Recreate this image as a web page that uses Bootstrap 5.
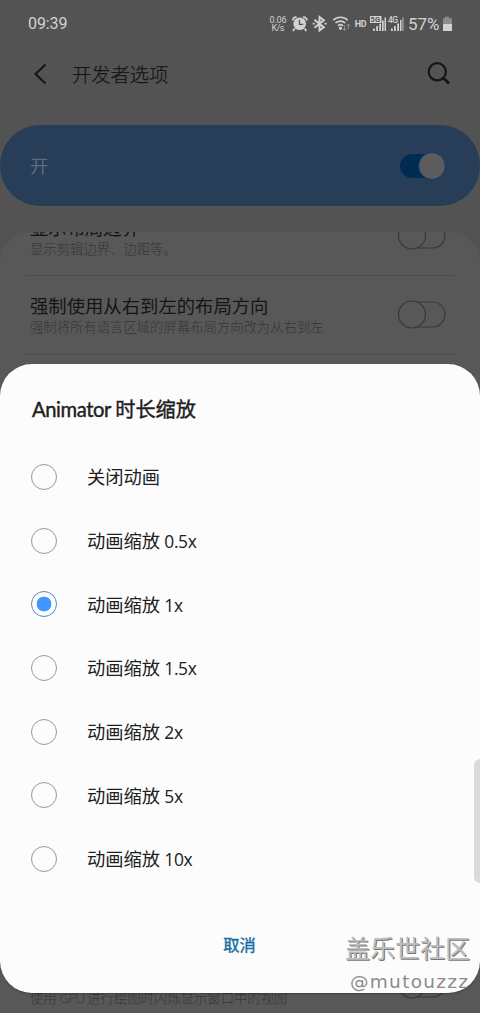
<!DOCTYPE html>
<html lang="zh-CN">
<head>
<meta charset="utf-8">
<meta name="viewport" content="width=device-width, initial-scale=1">
<title>开发者选项</title>
<link rel="stylesheet" href="https://cdn.jsdelivr.net/npm/bootstrap@5.3.0/dist/css/bootstrap.min.css">
<style>
body{background:#535353;font-family:"Open Sans","Noto Sans CJK SC",sans-serif;color:#151515}
.screen{width:480px;height:1013px}
.status{height:47px;padding:0 27px 0 28px;color:#d2d2d2;font-family:Roboto,"Noto Sans CJK SC",sans-serif}
.clock{font-size:16px;letter-spacing:-.1px}
.appbar{height:54px;padding:0 29px 0 32px}
.appbar-title{font-size:19.3px;font-weight:300;line-height:28px;-webkit-text-stroke:.25px #151515;padding-top:2px}
.master{height:81px;margin-top:24px;padding:0 33px 0 30px;border-radius:40px;background:#283d58;color:#606b7a;font-size:18.5px}
.panel{margin-top:26px;height:781px;border-radius:32px 32px 0 0;background:#585858}
.setting{margin:0 25px;padding:0 8px 0 5px;border-bottom:1px solid #4d4d4d}
.setting-title{font-size:18.35px;line-height:24px}
.setting-sub{font-size:13.35px;line-height:18px;color:#363636;font-weight:300;white-space:nowrap}
.first{height:44px}.second{height:79px}.last-row{height:48px;border:0}
.first .copy{padding-bottom:17px}
.last-row .copy{padding-top:3px}
.last-row .setting-sub span{letter-spacing:-.7px}
.sheet{top:364px;height:629px;border-radius:32px;background:#fcfcfc;color:#202020;box-shadow:0 1px 2px #0004;padding:27px 31px 0 30px}
.sheet-title{font-size:20.2px;line-height:36px;font-weight:400;-webkit-text-stroke:.4px #202020;white-space:pre;padding-left:2px}
.sheet-title span{font-family:Lato;letter-spacing:-.42px}
.option{height:63.7px;gap:30.5px;font-size:18.3px;padding-left:.5px}
.option .form-check-input{width:26px;height:26px;margin:0;border:1px solid #999;background-color:transparent;box-shadow:none}
.option .form-check-input:checked{border-color:#4b8ec0;background:radial-gradient(circle,#4297ff 0 7px,transparent 7.7px)}
.option label{line-height:26px;white-space:pre;padding-top:1px}
.option label span{font-size:17.4px;letter-spacing:-.35px}
.cancel{color:#146ca4;font-size:16.3px;line-height:24px;font-weight:400;-webkit-text-stroke:.4px #146ca4}
.edge{left:474px;top:759px;width:12px;height:124px;border-radius:6px;background:#dadada}
.credit{left:345px;top:931px;color:#aaa;white-space:nowrap}
.credit-name{font-size:25px;line-height:34px;color:#bdbdbd;text-shadow:1px 1px 0 #777}
.credit-user{font-family:"DejaVu Sans",sans-serif;font-size:18.5px;letter-spacing:1.3px;line-height:28px;margin:3px 0 0 5px;color:#8c8c8c}
svg{display:block}
svg text{font-family:Roboto,sans-serif}
</style>
</head>
<body>
<main class="screen position-relative overflow-hidden">
  <header class="status d-flex align-items-center justify-content-between">
    <span class="clock">09:39</span>
    <svg width="186" height="24" viewBox="267 11 186 24" fill="#d2d2d2" role="img" aria-label="状态栏">
      <text x="269.5" y="21.5" font-size="9" textLength="17">0.06</text><text x="271.5" y="30" font-size="9" textLength="13">K/s</text>
      <circle cx="299.7" cy="22.7" r="6.3"/><path d="M294.7 27.5 293 30M304.6 27.5l1.8 2.5M292.8 19.5a3 3 0 0 1 3.8-3.2M303 16.3a3 3 0 0 1 3.8 3.2" fill="none" stroke="#d2d2d2" stroke-width="1.8"/><path d="M299.5 18.8v4.5h3.7" fill="none" stroke="#535353" stroke-width="1.3"/>
      <path d="m314.5 18.7 9.3 7.6-4.3 3.2V16l4.3 3.2-9.3 7.6M325.5 21.7v1.8M313.7 21.7v1.8" fill="none" stroke="#d2d2d2" stroke-width="2"/>
      <g fill="none" stroke="#d2d2d2" stroke-width="1.6"><path d="M333.2 19.2a10.5 10.5 0 0 1 14.5 0M335.5 22a7.2 7.2 0 0 1 9.8 0M338 24.8a3.6 3.6 0 0 1 5 0"/></g><circle cx="340.5" cy="27.2" r="1.6"/>
      <path d="M344.5 24.5v5m-1.7-1.8 1.7 1.8 1.7-1.8M348.3 28v-5m-1.7 1.8 1.7-1.8 1.7 1.8" fill="none" stroke="#909090"/>
      <text x="354.7" y="25.6" font-size="9" font-weight="700" textLength="12">HD</text>
      <rect x="370" y="15" width="11.5" height="7"/><text x="370.5" y="21.2" font-size="7.5" font-weight="700" fill="#535353" textLength="9.5">5G</text>
      <path d="M373 27.5h1.8V30H373zM376.2 25h1.8v5h-1.8zM379.2 22.8h1.8V30h-1.8zM382 19.5h1.7V30H382zM384.5 16.5h1.5V30h-1.5z"/>
      <text x="388" y="22" font-size="8.5" font-weight="500" textLength="10">4G</text><path d="M391 27.5h1.8V30H391zM394 25h1.8v5H394zM397.2 22.5h1.8V30h-1.8zM400 19h1.5v11H400z"/><path d="M402.3 16.5h1.3V30h-1.3z" fill="#aaa"/>
      <text x="408" y="29" font-size="16" textLength="31.5" lengthAdjust="spacingAndGlyphs">57%</text>
      <path d="M443 17.3h2v-1.5h4v1.5h3V23h-9z" fill="#8c8c8c"/><path d="M443 23h9v7h-9z"/>
    </svg>
  </header>
  <nav class="appbar d-flex align-items-center">
    <svg width="16" height="22" viewBox="0 0 16 22"><path d="M13.5 1.5 3.5 11l10 9.5" fill="none" stroke="#151515" stroke-width="2"/></svg>
    <span class="appbar-title ms-4">开发者选项</span>
    <svg class="ms-auto" width="24" height="24" viewBox="0 0 24 24" fill="none" stroke="#151515"><circle cx="10.3" cy="9.8" r="8.6" stroke-width="2.2"/><path d="m16.3 16 5.8 5.6" stroke-width="2.8"/></svg>
  </nav>
  <section class="master d-flex align-items-center justify-content-between">
    <span>开</span>
    <svg width="48" height="30" viewBox="0 0 48 30"><rect x="1" y="3" width="45" height="24" rx="12" fill="#002b52"/><circle cx="33" cy="15" r="13.4" fill="#5c5c5c" stroke="#103c65"/></svg>
  </section>
  <section class="panel overflow-hidden">
    <div class="setting first d-flex justify-content-between align-items-end">
      <div class="copy"><div class="setting-title">显示布局边界</div><div class="setting-sub">显示剪辑边界、边距等。</div></div>
      <svg class="flex-shrink-0" width="50" height="30" viewBox="0 0 50 30" fill="none" stroke="#393939" stroke-width="1.2" style="margin-bottom:24px"><path d="M20 2h15.5a12.5 12.5 0 0 1 0 25H20"/><circle cx="15" cy="14.5" r="13.5"/></svg>
    </div>
    <div class="setting second d-flex justify-content-between align-items-center">
      <div><div class="setting-title">强制使用从右到左的布局方向</div><div class="setting-sub">强制将所有语言区域的屏幕布局方向改为从右到左</div></div>
      <svg class="flex-shrink-0" width="50" height="30" viewBox="0 0 50 30" fill="none" stroke="#393939" stroke-width="1.2"><path d="M20 2h15.5a12.5 12.5 0 0 1 0 25H20"/><circle cx="15" cy="14.5" r="13.5"/></svg>
    </div>
    <div style="height:607px"></div>
    <div class="setting last-row d-flex justify-content-between align-items-start">
      <div class="copy"><div class="setting-title">显示面更新</div><div class="setting-sub">使用<span> GPU </span>进行绘图时闪烁显示窗口中的视图</div></div>
      <svg class="flex-shrink-0" width="50" height="30" viewBox="0 0 50 30" fill="none" stroke="#393939" stroke-width="1.2" style="margin-top:8px"><path d="M20 2h15.5a12.5 12.5 0 0 1 0 25H20"/><circle cx="15" cy="14.5" r="13.5"/></svg>
    </div>
  </section>

  <section class="sheet position-absolute start-0 w-100">
    <h1 class="sheet-title mb-0"><span>Animator </span>时长缩放</h1>
    <form style="padding-top:18px">
      <div class="option d-flex align-items-center"><input class="form-check-input" type="radio" name="scale" id="s0"><label for="s0">关闭动画</label></div>
      <div class="option d-flex align-items-center"><input class="form-check-input" type="radio" name="scale" id="s1"><label for="s1">动画缩放<span> 0.5x</span></label></div>
      <div class="option d-flex align-items-center"><input class="form-check-input" type="radio" name="scale" id="s2" checked><label for="s2">动画缩放<span> 1x</span></label></div>
      <div class="option d-flex align-items-center"><input class="form-check-input" type="radio" name="scale" id="s3"><label for="s3">动画缩放<span> 1.5x</span></label></div>
      <div class="option d-flex align-items-center"><input class="form-check-input" type="radio" name="scale" id="s4"><label for="s4">动画缩放<span> 2x</span></label></div>
      <div class="option d-flex align-items-center"><input class="form-check-input" type="radio" name="scale" id="s5"><label for="s5">动画缩放<span> 5x</span></label></div>
      <div class="option d-flex align-items-center"><input class="form-check-input" type="radio" name="scale" id="s6"><label for="s6">动画缩放<span> 10x</span></label></div>
    </form>
    <div class="text-center" style="padding-top:40px"><button class="cancel btn p-0 border-0">取消</button></div>
  </section>
  <div class="edge position-absolute"></div>
  <div class="credit position-absolute"><div class="credit-name">盖乐世社区</div><div class="credit-user">@mutouzzz</div></div>
</main>
<script src="https://cdn.jsdelivr.net/npm/bootstrap@5.3.0/dist/js/bootstrap.bundle.min.js"></script>
</body>
</html>
